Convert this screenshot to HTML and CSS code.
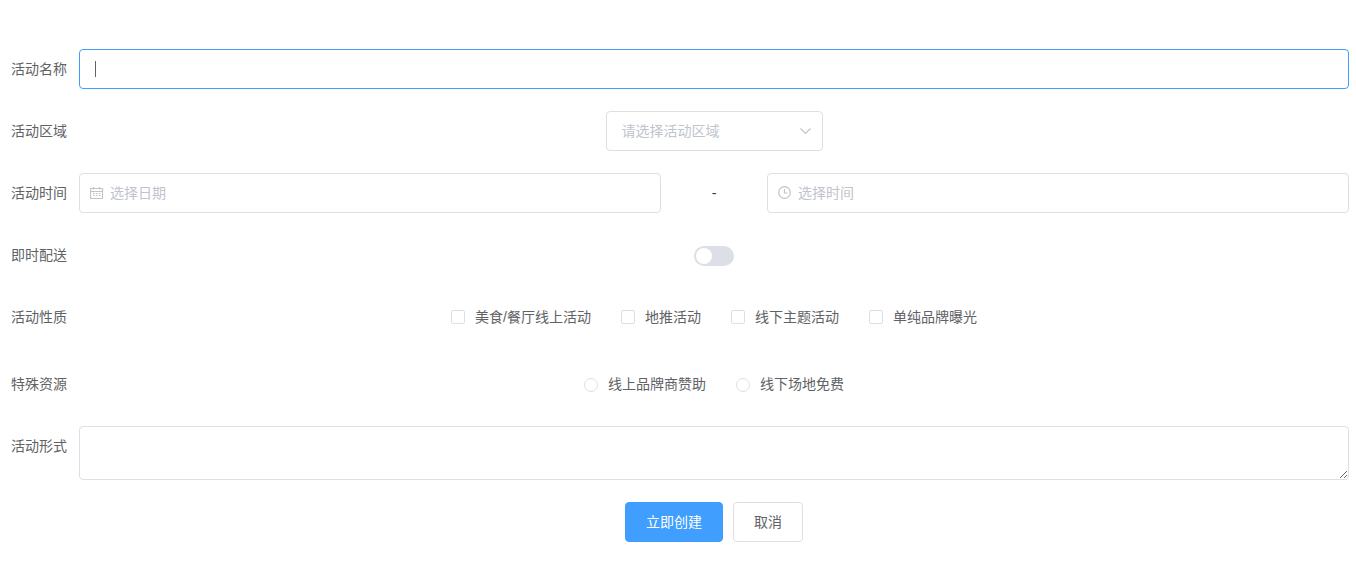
FILE: index.html
```html
<!DOCTYPE html>
<html lang="zh-CN">
<head>
    <meta charset="UTF-8">
    <title>活动</title>
    <link rel="stylesheet" href="styles.css">
</head>
<body>
    <form class="form">
        <div class="form-item">
            <label class="label">活动名称</label>
            <div class="content">
                <div class="input focus"><span class="caret"></span></div>
            </div>
        </div>
        <div class="form-item">
            <label class="label">活动区域</label>
            <div class="content">
                <div class="input select">
                    <span class="placeholder">请选择活动区域</span>
                    <svg class="arrow" width="14" height="14" viewBox="0 0 14 14"><path d="M2.5 4.5l5 5 5-5"/></svg>
                </div>
            </div>
        </div>
        <div class="form-item">
            <label class="label">活动时间</label>
            <div class="content">
                <div class="input picker">
                    <svg class="icon" width="14" height="14" viewBox="0 0 14 14"><path d="M.5 2.5h12v10H.5zM.5 5.5h12M3.5 1v2.5M9.5 1v2.5"/><path class="days" d="M3 7.5h7.500M3 9.500h7.500"/></svg>
                    <span class="placeholder">选择日期</span>
                </div>
                <div class="line">-</div>
                <div class="input picker">
                    <svg class="icon" width="14" height="14" viewBox="0 0 14 14"><circle cx="6.500" cy="6.500" r="5.800"/><path d="M6.500 3v4H9.500"/></svg>
                    <span class="placeholder">选择时间</span>
                </div>
            </div>
        </div>
        <div class="form-item">
            <label class="label">即时配送</label>
            <div class="content">
                <span class="switch"></span>
            </div>
        </div>
        <div class="form-item item-type">
            <label class="label">活动性质</label>
            <div class="content options">
                <label class="option"><span class="checkbox"></span>美食/餐厅线上活动</label>
                <label class="option"><span class="checkbox"></span>地推活动</label>
                <label class="option"><span class="checkbox"></span>线下主题活动</label>
                <label class="option"><span class="checkbox"></span>单纯品牌曝光</label>
            </div>
        </div>
        <div class="form-item">
            <label class="label">特殊资源</label>
            <div class="content options">
                <label class="option"><span class="radio"></span>线上品牌商赞助</label>
                <label class="option"><span class="radio"></span>线下场地免费</label>
            </div>
        </div>
        <div class="form-item">
            <label class="label">活动形式</label>
            <div class="content">
                <textarea class="textarea"></textarea>
            </div>
        </div>
        <div class="form-item">
            <label class="label"></label>
            <div class="content buttons">
                <button type="button" class="btn primary">立即创建</button>
                <button type="button" class="btn">取消</button>
            </div>
        </div>
    </form>
</body>
</html>
```
FILE: styles.css
```css
*{
    box-sizing: border-box;
}
body{
    margin: 0;
    background: #fff;
    color: #2c3e50;
    font-family: "Liberation Sans", "Noto Sans CJK SC", sans-serif;
    font-size: 14px;
}
.form{
    padding: 49px 7px 0 0;
}
.form-item{
    display: flex;
    margin-bottom: 22px;
}
.item-type{
    margin-bottom: 27px;
}
.label{
    width: 79px;
    flex: none;
    padding-right: 12px;
    line-height: 40px;
    text-align: right;
    color: #606266;
}
.content{
    flex: 1;
    display: flex;
    justify-content: center;
    align-items: center;
    min-height: 40px;
    line-height: 40px;
}
.input{
    display: flex;
    align-items: center;
    width: 100%;
    height: 40px;
    padding: 0 15px;
    border: 1px solid #dcdfe6;
    border-radius: 4px;
    background: #fff;
    line-height: 38px;
}
.focus{
    border-color: #409eff;
}
.caret{
    width: 1px;
    height: 16px;
    background: #606266;
}
.placeholder{
    color: #c0c4cc;
}
.select{
    width: 217px;
    padding-right: 10px;
    justify-content: space-between;
}
.picker{
    flex: 1;
    padding-left: 10px;
}
.arrow,
.icon{
    fill: none;
    stroke: #c0c4cc;
    stroke-width: 1.2;
}
.icon{
    margin-right: 6px;
}
.days{
    stroke-dasharray: 1.7 1.2;
}
.line{
    width: 106px;
    text-align: center;
}
.switch{
    width: 40px;
    height: 20px;
    margin-top: 2px;
    padding: 2px;
    border-radius: 10px;
    background: #dcdfe6;
}
.switch::after{
    content: "";
    display: block;
    width: 16px;
    height: 16px;
    border-radius: 50%;
    background: #fff;
}
.options{
    gap: 30px;
}
.option{
    display: flex;
    align-items: center;
    color: #606266;
}
.checkbox,
.radio{
    width: 14px;
    height: 14px;
    margin-right: 10px;
    border: 1px solid #dcdfe6;
    border-radius: 2px;
    background: #fff;
}
.radio{
    margin-top: 2px;
    border-radius: 50%;
}
.textarea{
    display: block;
    width: 100%;
    height: 54px;
    padding: 5px 15px;
    border: 1px solid #dcdfe6;
    border-radius: 4px;
    resize: vertical;
}
.buttons{
    gap: 10px;
}
.btn{
    height: 40px;
    padding: 0 20px 2px;
    border: 1px solid #dcdfe6;
    border-radius: 4px;
    background: #fff;
    color: #606266;
    font-family: inherit;
    font-size: 14px;
}
.primary{
    border-color: #409eff;
    background: #409eff;
    color: #fff;
}
```
